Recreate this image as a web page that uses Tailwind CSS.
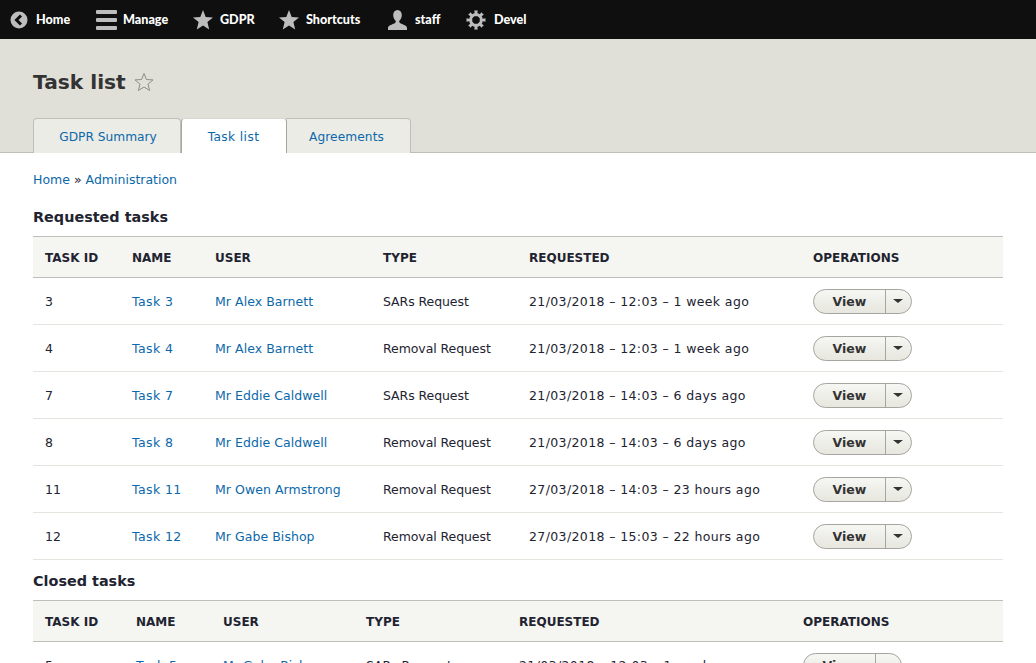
<!DOCTYPE html>
<html lang="en">
  <head>
    <meta charset="UTF-8" />
    <title>Task list</title>
    <script src="https://cdn.jsdelivr.net/npm/@tailwindcss/browser@4"></script>
  </head>
  <body class="h-[663px] overflow-hidden bg-white font-['DejaVu_Sans',sans-serif] text-[12.5px] text-[#222330]">
    <!-- toolbar -->
    <nav class="flex h-[39px] items-center bg-[#0f0f0f] font-['Lato',sans-serif] text-[12.6px] font-black text-white shadow-[0_1px_2px_rgba(0,0,0,0.3)]">
      <svg class="ml-[10px] h-[18px] w-[18px]" viewBox="0 0 18 18"><circle cx="9" cy="9" r="8.500" fill="#bdbdbd"/><path d="M11 4.500 6.500 9l4.500 4.500" fill="none" stroke="#0f0f0f" stroke-width="3"/></svg>
      <span class="ml-[8px] w-[34px] pt-[2px]">Home</span>
      <svg class="ml-[26px] h-[20px] w-[21px]" viewBox="0 0 21 20"><path d="M1 0h19a1 1 0 0 1 1 1v2a1 1 0 0 1-1 1H1a1 1 0 0 1-1-1V1a1 1 0 0 1 1-1zM1 8h19a1 1 0 0 1 1 1v2a1 1 0 0 1-1 1H1a1 1 0 0 1-1-1V9a1 1 0 0 1 1-1zM1 16h19a1 1 0 0 1 1 1v2a1 1 0 0 1-1 1H1a1 1 0 0 1-1-1v-2a1 1 0 0 1 1-1z" fill="#bdbdbd"/></svg>
      <span class="ml-[6px] w-[44px] pt-[2px]">Manage</span>
      <svg class="ml-[26px] h-[20px] w-[20px]" viewBox="0 0 20 20"><path d="M10 0l2.700 6.900 7.300.5-5.600 4.700 1.800 7.300L10 15.400l-6.200 4 1.800-7.300L0 7.400l7.300-.5z" fill="#bdbdbd"/></svg>
      <span class="ml-[7px] w-[38px] pt-[2px]">GDPR</span>
      <svg class="ml-[21px] h-[20px] w-[20px]" viewBox="0 0 20 20"><path d="M10 0l2.700 6.900 7.300.5-5.600 4.700 1.800 7.300L10 15.400l-6.200 4 1.800-7.300L0 7.400l7.300-.5z" fill="#bdbdbd"/></svg>
      <span class="ml-[7px] w-[56px] pt-[2px]">Shortcuts</span>
      <svg class="ml-[26px] h-[20px] w-[19px]" viewBox="0 0 19 20"><path d="M9.500 0c2.700 0 4.300 2.200 4.300 5 0 2.300-1 4.400-2.200 5.400-.6.600-.4 2 .4 2.700 1.500 1.200 6 2 7 4.400V20H0v-2.500c1-2.400 5.500-3.200 7-4.400.8-.7 1-2.100.4-2.700C6.200 9.400 5.200 7.300 5.200 5c0-2.800 1.600-5 4.300-5z" fill="#bdbdbd"/></svg>
      <span class="ml-[8px] w-[26px] pt-[2px]">staff</span>
      <svg class="ml-[25px] h-[20px] w-[20px]" viewBox="0 0 20 20"><circle cx="10" cy="10" r="5.300" fill="none" stroke="#bdbdbd" stroke-width="3.200"/><path d="M10 10 8.200 .5h3.600zM10 10 8.200 19.500h3.600zM10 10 .5 8.200v3.600zM10 10l9.500-1.800v3.600zM10 10 2.200 4.700l2.500-2.500zM10 10l7.800 5.300-2.500 2.500zM10 10l5.300-7.800 2.500 2.500zM10 10l-5.300 7.800-2.500-2.500z" fill="#bdbdbd"/><circle cx="10" cy="10" r="3.700" fill="#0f0f0f"/></svg>
      <span class="ml-[8px] w-[31px] pt-[2px]">Devel</span>
    </nav>

    <!-- page header -->
    <header class="h-[114px] border-b border-[#bfbfba] bg-[#e0e0d8] px-[33px]">
      <div class="flex h-[79px] items-center gap-[8px] pt-[7px]">
        <h1 class="text-[20.2px] leading-none font-bold text-[#333]">Task list</h1>
        <svg class="h-[20px] w-[20px]" viewBox="0 0 20 20"><path d="M10 1.500l2.400 6 6.600.4-5 4.200 1.600 6.400L10 15l-5.600 3.500L6 12.100 1 7.900l6.600-.4z" fill="none" stroke="#8e8e88"/></svg>
      </div>
      <div class="flex h-[35px] text-[12.2px] text-[#0b68aa]">
        <a class="flex w-[148px] items-center justify-center rounded-t border border-b-0 border-[#bfbfba] bg-[#ecece6] pt-[2px] pl-[2px]">GDPR Summary</a>
        <a class="relative z-10 flex h-[35px] w-[106px] items-center justify-center rounded-t border border-b-0 border-[#a6a6a0] border-t-[#d8d8d2] bg-white pt-[2px] pr-[1px] tracking-[0.4px]">Task list</a>
        <a class="-ml-px flex w-[125px] items-center justify-center rounded-tr border border-b-0 border-l-0 border-[#bfbfba] bg-[#ecece6] pt-[2px] pr-[3px] tracking-[0.1px]">Agreements</a>
      </div>
    </header>

    <main class="px-[33px]">
      <div class="flex h-[53px] items-center gap-[4px] pt-[1px] text-[#0b68aa]">
        <a>Home</a><span class="text-[#222330]">»</span><a>Administration</a>
      </div>

      <h2 class="h-[30px] pt-[1px] text-[14.400px] leading-[20px] font-bold text-[#222330]">Requested tasks</h2>
      <table class="w-[970px] table-fixed border-collapse">
        <colgroup><col class="w-[87px]" /><col class="w-[83px]" /><col class="w-[168px]" /><col class="w-[146px]" /><col class="w-[284px]" /><col /></colgroup>
        <thead>
          <tr class="h-[41px] border-y border-[#bfbfba] bg-[#f5f5f2] text-left text-[12px] font-bold">
            <th class="pt-[2px] pl-[12px]">TASK ID</th><th class="pt-[2px] pl-[12px]">NAME</th><th class="pt-[2px] pl-[12px]">USER</th><th class="pt-[2px] pl-[12px]">TYPE</th><th class="pt-[2px] pl-[12px]">REQUESTED</th><th class="pt-[2px] pl-[12px]">OPERATIONS</th>
          </tr>
        </thead>
        <tbody>
          <tr class="h-[47px] border-b border-[#e6e4df]">
            <td class="pt-[2px] pl-[12px]">3</td>
            <td class="pt-[2px] pl-[12px] tracking-[0.4px] text-[#0b68aa]">Task 3</td>
            <td class="pt-[2px] pl-[12px] tracking-[0.05px] text-[#0b68aa]">Mr Alex Barnett</td>
            <td class="pt-[2px] pl-[12px] tracking-[-0.08px]">SARs Request</td>
            <td class="pt-[2px] pl-[12px] tracking-[0.38px]">21/03/2018 – 12:03 – 1 week ago</td>
            <td class="pl-[12px]"><div class="flex h-[25px] w-[99px] items-center rounded-full border border-[#a6a6a0] bg-gradient-to-b from-[#f6f6f3] to-[#e7e7df] text-[#333] font-bold"><span class="flex h-full w-[72px] items-center justify-center border-r border-[#a6a6a0] pt-[2px]">View</span><svg class="ml-[7px] h-[4px] w-[10px]" viewBox="0 0 10 4"><path d="M0 0h10L5 4z" fill="#333"/></svg></div></td>
          </tr>
          <tr class="h-[47px] border-b border-[#e6e4df]">
            <td class="pt-[2px] pl-[12px]">4</td>
            <td class="pt-[2px] pl-[12px] tracking-[0.4px] text-[#0b68aa]">Task 4</td>
            <td class="pt-[2px] pl-[12px] tracking-[0.05px] text-[#0b68aa]">Mr Alex Barnett</td>
            <td class="pt-[2px] pl-[12px] tracking-[-0.08px]">Removal Request</td>
            <td class="pt-[2px] pl-[12px] tracking-[0.38px]">21/03/2018 – 12:03 – 1 week ago</td>
            <td class="pl-[12px]"><div class="flex h-[25px] w-[99px] items-center rounded-full border border-[#a6a6a0] bg-gradient-to-b from-[#f6f6f3] to-[#e7e7df] text-[#333] font-bold"><span class="flex h-full w-[72px] items-center justify-center border-r border-[#a6a6a0] pt-[2px]">View</span><svg class="ml-[7px] h-[4px] w-[10px]" viewBox="0 0 10 4"><path d="M0 0h10L5 4z" fill="#333"/></svg></div></td>
          </tr>
          <tr class="h-[47px] border-b border-[#e6e4df]">
            <td class="pt-[2px] pl-[12px]">7</td>
            <td class="pt-[2px] pl-[12px] tracking-[0.4px] text-[#0b68aa]">Task 7</td>
            <td class="pt-[2px] pl-[12px] tracking-[0.05px] text-[#0b68aa]">Mr Eddie Caldwell</td>
            <td class="pt-[2px] pl-[12px] tracking-[-0.08px]">SARs Request</td>
            <td class="pt-[2px] pl-[12px] tracking-[0.38px]">21/03/2018 – 14:03 – 6 days ago</td>
            <td class="pl-[12px]"><div class="flex h-[25px] w-[99px] items-center rounded-full border border-[#a6a6a0] bg-gradient-to-b from-[#f6f6f3] to-[#e7e7df] text-[#333] font-bold"><span class="flex h-full w-[72px] items-center justify-center border-r border-[#a6a6a0] pt-[2px]">View</span><svg class="ml-[7px] h-[4px] w-[10px]" viewBox="0 0 10 4"><path d="M0 0h10L5 4z" fill="#333"/></svg></div></td>
          </tr>
          <tr class="h-[47px] border-b border-[#e6e4df]">
            <td class="pt-[2px] pl-[12px]">8</td>
            <td class="pt-[2px] pl-[12px] tracking-[0.4px] text-[#0b68aa]">Task 8</td>
            <td class="pt-[2px] pl-[12px] tracking-[0.05px] text-[#0b68aa]">Mr Eddie Caldwell</td>
            <td class="pt-[2px] pl-[12px] tracking-[-0.08px]">Removal Request</td>
            <td class="pt-[2px] pl-[12px] tracking-[0.38px]">21/03/2018 – 14:03 – 6 days ago</td>
            <td class="pl-[12px]"><div class="flex h-[25px] w-[99px] items-center rounded-full border border-[#a6a6a0] bg-gradient-to-b from-[#f6f6f3] to-[#e7e7df] text-[#333] font-bold"><span class="flex h-full w-[72px] items-center justify-center border-r border-[#a6a6a0] pt-[2px]">View</span><svg class="ml-[7px] h-[4px] w-[10px]" viewBox="0 0 10 4"><path d="M0 0h10L5 4z" fill="#333"/></svg></div></td>
          </tr>
          <tr class="h-[47px] border-b border-[#e6e4df]">
            <td class="pt-[2px] pl-[12px]">11</td>
            <td class="pt-[2px] pl-[12px] tracking-[0.4px] text-[#0b68aa]">Task 11</td>
            <td class="pt-[2px] pl-[12px] tracking-[0.05px] text-[#0b68aa]">Mr Owen Armstrong</td>
            <td class="pt-[2px] pl-[12px] tracking-[-0.08px]">Removal Request</td>
            <td class="pt-[2px] pl-[12px] tracking-[0.38px]">27/03/2018 – 14:03 – 23 hours ago</td>
            <td class="pl-[12px]"><div class="flex h-[25px] w-[99px] items-center rounded-full border border-[#a6a6a0] bg-gradient-to-b from-[#f6f6f3] to-[#e7e7df] text-[#333] font-bold"><span class="flex h-full w-[72px] items-center justify-center border-r border-[#a6a6a0] pt-[2px]">View</span><svg class="ml-[7px] h-[4px] w-[10px]" viewBox="0 0 10 4"><path d="M0 0h10L5 4z" fill="#333"/></svg></div></td>
          </tr>
          <tr class="h-[47px] border-b border-[#e6e4df]">
            <td class="pt-[2px] pl-[12px]">12</td>
            <td class="pt-[2px] pl-[12px] tracking-[0.4px] text-[#0b68aa]">Task 12</td>
            <td class="pt-[2px] pl-[12px] tracking-[0.05px] text-[#0b68aa]">Mr Gabe Bishop</td>
            <td class="pt-[2px] pl-[12px] tracking-[-0.08px]">Removal Request</td>
            <td class="pt-[2px] pl-[12px] tracking-[0.38px]">27/03/2018 – 15:03 – 22 hours ago</td>
            <td class="pl-[12px]"><div class="flex h-[25px] w-[99px] items-center rounded-full border border-[#a6a6a0] bg-gradient-to-b from-[#f6f6f3] to-[#e7e7df] text-[#333] font-bold"><span class="flex h-full w-[72px] items-center justify-center border-r border-[#a6a6a0] pt-[2px]">View</span><svg class="ml-[7px] h-[4px] w-[10px]" viewBox="0 0 10 4"><path d="M0 0h10L5 4z" fill="#333"/></svg></div></td>
          </tr>
        </tbody>
      </table>

      <h2 class="mt-[10px] h-[30px] pt-[1px] text-[14.400px] leading-[20px] font-bold text-[#222330]">Closed tasks</h2>
      <table class="w-[970px] table-fixed border-collapse">
        <colgroup><col class="w-[91px]" /><col class="w-[87px]" /><col class="w-[143px]" /><col class="w-[153px]" /><col class="w-[284px]" /><col /></colgroup>
        <thead>
          <tr class="h-[41px] border-y border-[#bfbfba] bg-[#f5f5f2] text-left text-[12px] font-bold">
            <th class="pt-[2px] pl-[12px]">TASK ID</th><th class="pt-[2px] pl-[12px]">NAME</th><th class="pt-[2px] pl-[12px]">USER</th><th class="pt-[2px] pl-[12px]">TYPE</th><th class="pt-[2px] pl-[12px]">REQUESTED</th><th class="pt-[2px] pl-[12px]">OPERATIONS</th>
          </tr>
        </thead>
        <tbody>
          <tr class="h-[47px] border-b border-[#e6e4df]">
            <td class="pt-[2px] pl-[12px]">5</td>
            <td class="pt-[2px] pl-[12px] tracking-[0.4px] text-[#0b68aa]">Task 5</td>
            <td class="pt-[2px] pl-[12px] tracking-[0.05px] text-[#0b68aa]">Mr Gabe Bishop</td>
            <td class="pt-[2px] pl-[12px] tracking-[-0.08px]">SARs Request</td>
            <td class="pt-[2px] pl-[12px] tracking-[0.38px]">21/03/2018 – 12:03 – 1 week ago</td>
            <td class="pl-[12px]"><div class="flex h-[25px] w-[99px] items-center rounded-full border border-[#a6a6a0] bg-gradient-to-b from-[#f6f6f3] to-[#e7e7df] text-[#333] font-bold"><span class="flex h-full w-[72px] items-center justify-center border-r border-[#a6a6a0] pt-[2px]">View</span><svg class="ml-[7px] h-[4px] w-[10px]" viewBox="0 0 10 4"><path d="M0 0h10L5 4z" fill="#333"/></svg></div></td>
          </tr>
        </tbody>
      </table>
    </main>
  </body>
</html>
